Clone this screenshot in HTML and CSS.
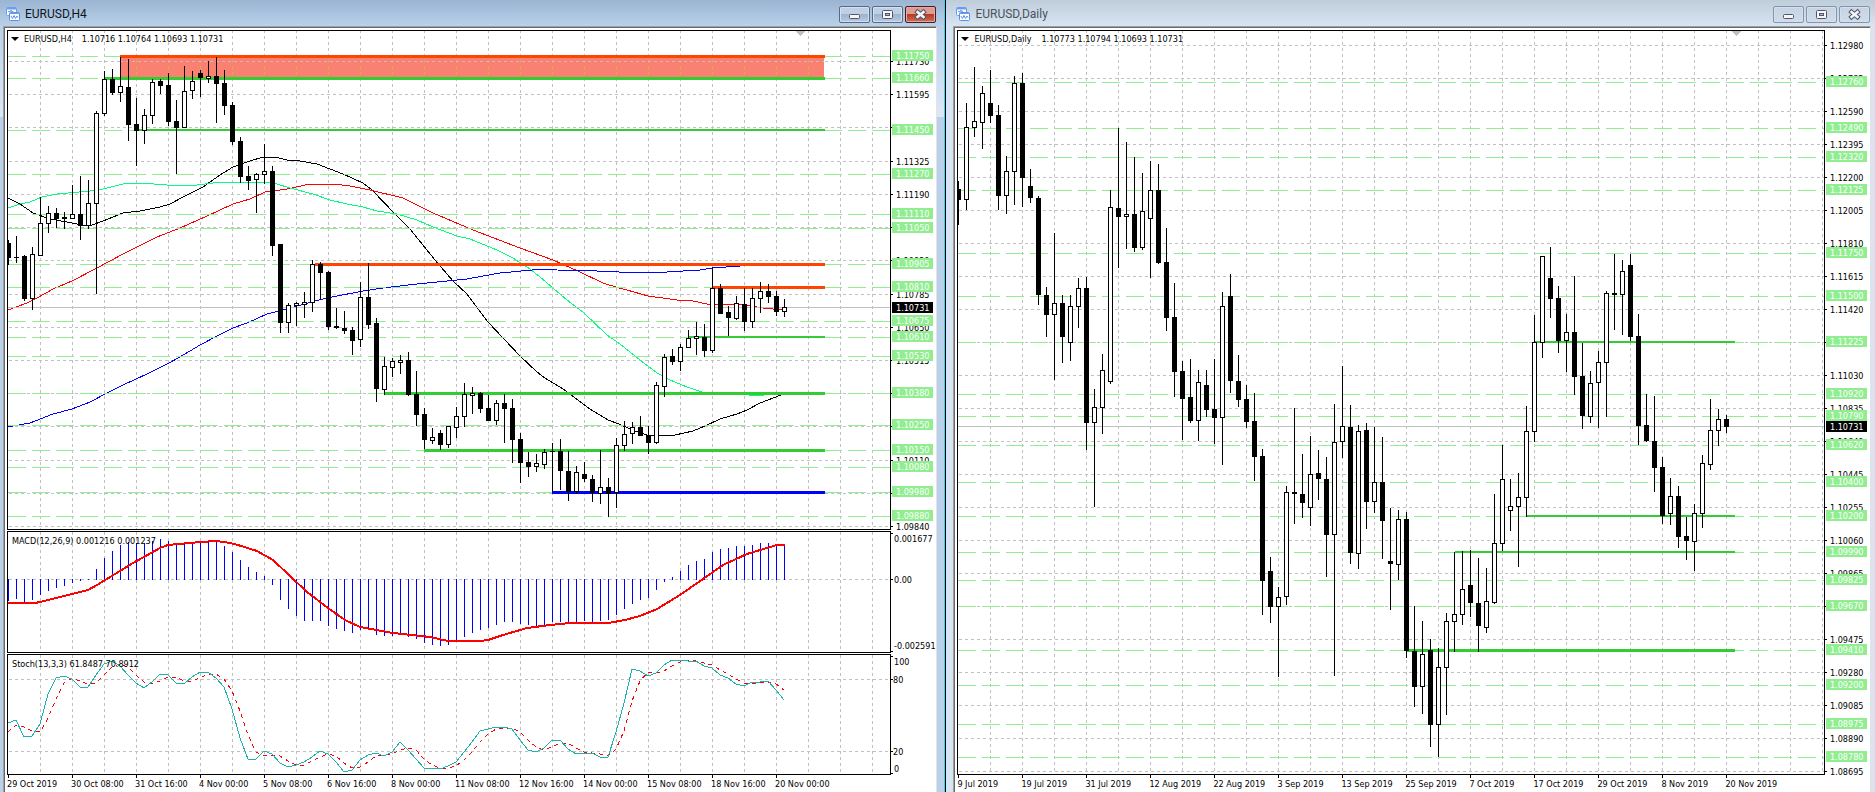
FILE: index.html
```html
<!DOCTYPE html>
<html lang="en">
<head>
<meta charset="utf-8">
<title>EURUSD charts</title>
<link rel="stylesheet" href="styles.css">
</head>
<body>
<svg class="sprite" aria-hidden="true">
  <symbol id="i-app" viewBox="0 0 14 14">
    <rect x="0.5" y="0.5" width="10" height="8" rx="1" fill="#fff" stroke="#6a9df0"/>
    <path d="M1 1.5h9" stroke="#6a9df0" stroke-width="2"/>
    <path d="M2 5l1-1 1 1 1-2 1 2 1-1" fill="none" stroke="#6a9df0"/>
    <rect x="3.5" y="5.500" width="10" height="8" rx="1" fill="#fff" stroke="#5a90ea"/>
    <path d="M4 6.500h9" stroke="#6a9df0" stroke-width="1"/>
    <path d="M5 9l1.500 2.500L8 8.500l1.500 3L11 9l1 1.500" fill="none" stroke="#5a90ea"/>
  </symbol>
  <symbol id="i-min" viewBox="0 0 31 17">
    <rect x="10.500" y="8.500" width="10" height="4" rx="1" fill="#f6f6f6" stroke="#53566b"/>
  </symbol>
  <symbol id="i-max" viewBox="0 0 31 17">
    <rect x="10.500" y="4.500" width="10" height="8" rx="1" fill="#f6f6f6" stroke="#53566b"/>
    <rect x="13.500" y="7.500" width="4" height="2" fill="#a9bfd8" stroke="#53566b"/>
  </symbol>
  <symbol id="i-close" viewBox="0 0 31 17">
    <path d="M12.500 6l6 5M18.500 6l-6 5" stroke="#53566b" stroke-width="4.500" stroke-linecap="square"/>
    <path d="M12.500 6l6 5M18.500 6l-6 5" stroke="#f6f6f6" stroke-width="2.500" stroke-linecap="square"/>
  </symbol>
</svg>

<main class="workspace">
  <section class="window window-active">
    <header class="titlebar">
      <svg class="app-icon" aria-hidden="true"><use href="#i-app"/></svg>
      <h1 class="title">EURUSD,H4</h1>
      <div class="controls">
        <button class="ctl" type="button" aria-label="Minimize"><svg><use href="#i-min"/></svg></button>
        <button class="ctl" type="button" aria-label="Restore"><svg><use href="#i-max"/></svg></button>
        <button class="ctl ctl-close" type="button" aria-label="Close"><svg><use href="#i-close"/></svg></button>
      </div>
    </header>
    <div class="client">
      <div class="pane pane-main">
        <div class="plot">
          <svg class="canvas" id="h4-plot"></svg>
          <p class="caption caption-main"><span class="caret"></span><span>EURUSD,H4</span><span>1.10716 1.10764 1.10693 1.10731</span></p>
        </div>
        <svg class="scale" id="h4-scale"></svg>
      </div>
      <div class="pane pane-macd">
        <div class="plot">
          <svg class="canvas" id="macd-plot"></svg>
          <p class="caption">MACD(12,26,9) 0.001216 0.001237</p>
        </div>
        <svg class="scale" id="macd-scale"></svg>
      </div>
      <div class="pane pane-stoch">
        <div class="plot">
          <svg class="canvas" id="stoch-plot"></svg>
          <p class="caption">Stoch(13,3,3) 61.8487 70.8912</p>
        </div>
        <svg class="scale" id="stoch-scale"></svg>
      </div>
      <div class="time-axis">
        <span>29 Oct 2019</span><span>30 Oct 08:00</span><span>31 Oct 16:00</span><span>4 Nov 00:00</span><span>5 Nov 08:00</span><span>6 Nov 16:00</span><span>8 Nov 00:00</span><span>11 Nov 08:00</span><span>12 Nov 16:00</span><span>14 Nov 00:00</span><span>15 Nov 08:00</span><span>18 Nov 16:00</span><span>20 Nov 00:00</span>
      </div>
    </div>
  </section>

  <section class="window window-inactive">
    <header class="titlebar">
      <svg class="app-icon" aria-hidden="true"><use href="#i-app"/></svg>
      <h2 class="title">EURUSD,Daily</h2>
      <div class="controls">
        <button class="ctl" type="button" aria-label="Minimize"><svg><use href="#i-min"/></svg></button>
        <button class="ctl" type="button" aria-label="Restore"><svg><use href="#i-max"/></svg></button>
        <button class="ctl" type="button" aria-label="Close"><svg><use href="#i-close"/></svg></button>
      </div>
    </header>
    <div class="client">
      <div class="pane pane-main">
        <div class="plot">
          <svg class="canvas" id="d1-plot"></svg>
          <p class="caption caption-main"><span class="caret"></span><span>EURUSD,Daily</span><span>1.10773 1.10794 1.10693 1.10731</span></p>
        </div>
        <svg class="scale" id="d1-scale"></svg>
      </div>
      <div class="time-axis">
        <span>9 Jul 2019</span><span>19 Jul 2019</span><span>31 Jul 2019</span><span>12 Aug 2019</span><span>22 Aug 2019</span><span>3 Sep 2019</span><span>13 Sep 2019</span><span>25 Sep 2019</span><span>7 Oct 2019</span><span>17 Oct 2019</span><span>29 Oct 2019</span><span>8 Nov 2019</span><span>20 Nov 2019</span>
      </div>
    </div>
  </section>
</main>
<script src="charts.js"></script>
</body>
</html>
```

FILE: styles.css
```css
* { box-sizing: border-box; }

body {
  margin: 0;
  background: #fff;
  color: #000;
  font-family: "DejaVu Sans Condensed", "DejaVu Sans", sans-serif;
  font-size: 9px;
}

.sprite { display: none; }

.workspace {
  display: flex;
  height: 100vh;
  min-height: 480px;
  overflow: hidden;
}

.window {
  display: flex;
  flex-direction: column;
  min-width: 0;
}

.window-active {
  flex: 946 1 0;
  border-right: 1px solid #000;
  box-shadow: inset -1px 0 0 #35d6f5;
  background:
    linear-gradient(#9ab4d2, #b9d1ea) 0 0 / 100% 26px no-repeat,
    linear-gradient(#b9d1ea, #dbe8f6) 0 26px / 100% 91px no-repeat,
    #b9d1ea;
  padding: 0 8px 0 3px;
}

.window-inactive {
  flex: 929 1 0;
  background:
    linear-gradient(#bfcddb, #d7e4f2) 0 0 / 100% 26px no-repeat,
    #d7e4f2;
  padding: 0 4px 0 7px;
}

.titlebar {
  display: flex;
  align-items: center;
  height: 26px;
  flex: none;
  padding: 2px 1px 0 3px;
}

.app-icon { width: 14px; height: 14px; }

.title {
  margin: 0 auto 0 5px;
  font: 400 12px/16px Roboto, sans-serif;
  color: #10151c;
}

.window-inactive .title { color: #4c5157; }

.controls { display: flex; gap: 2px; }

.ctl {
  width: 31px;
  height: 17px;
  padding: 0;
  border: 1px solid #586a86;
  border-radius: 2px;
  background: linear-gradient(#bfd0e4 0 45%, #9db4cf 50%, #b6cbe3);
  box-shadow: inset 0 0 0 1px #d3e0ef;
}

.ctl svg { display: block; width: 31px; height: 17px; margin: -1px; }

.window-inactive .ctl {
  border-color: #8593ad;
  background: linear-gradient(#c6d3e2, #cfdcea);
  box-shadow: inset 0 0 0 1px #d3dfeb;
}

.window-active .ctl-close {
  border-color: #431d28;
  background: linear-gradient(#dd9c91 0 45%, #b83a22 50%, #d0705a);
  box-shadow: inset 0 0 0 1px #e3a99f;
}

.client {
  flex: 1;
  min-height: 0;
  display: flex;
  flex-direction: column;
  gap: 1px;
  border: 1px solid #a0a0a0;
  border-right-color: #e3e3e3;
  border-bottom: 0;
  background: #fff;
  box-shadow: inset 1px 1px 0 #696969;
  padding: 3px 0 0 3px;
}

.pane { display: flex; }
.pane-main { flex: 1; min-height: 0; }
.pane-macd { height: 122px; flex: none; }
.pane-stoch { height: 121px; flex: none; }

.plot {
  position: relative;
  flex: 1;
  min-width: 0;
  border: 1px solid #000;
  overflow: hidden;
}

.canvas {
  display: block;
  width: 100%;
  height: 100%;
  shape-rendering: crispEdges;
}

.scale {
  width: 45px;
  height: 100%;
  flex: none;
  overflow: visible;
  shape-rendering: crispEdges;
}

.caption {
  position: absolute;
  top: 3px;
  left: 4px;
  margin: 0;
  line-height: 12px;
  white-space: nowrap;
}

.caption-main {
  display: flex;
  align-items: center;
  gap: 5px;
  top: 2px;
  left: 3px;
}

.caption-main span:last-child { margin-left: 5px; }

.caret {
  border: 4px solid transparent;
  border-top-color: #000;
  border-bottom: 0;
}

.time-axis {
  display: flex;
  flex: none;
  height: 17px;
  margin-top: -1px;
  overflow: hidden;
  line-height: 19px;
}

.time-axis span {
  flex: 0 0 64px;
  white-space: nowrap;
  background: linear-gradient(#000, #000) 1px 0 / 1px 3px no-repeat;
}

.grid { stroke: #c0c0c0; stroke-dasharray: 3 3; }
.grid-shaded { stroke: #bcc04a; stroke-dasharray: 3 3; }
.level { stroke: #90ee90; stroke-dasharray: 18 6; }
.price-line { stroke: #c0c0c0; }
.zone { fill: #fa8072; }
.curve { fill: none; }
.wick { stroke: #000; }
.body-up { fill: #fff; stroke: #000; }
.body-down { fill: #000; stroke: #000; }
.histogram { stroke: #00f; }
.signal { fill: none; stroke: #f00; stroke-width: 2; }
.stoch-main { fill: none; stroke: #20b2aa; }
.stoch-signal { fill: none; stroke: #f00; stroke-dasharray: 4 4; }
.shift-mark { fill: #c0c0c0; }
.tick { stroke: #000; }
.scale text { fill: #000; }
.tag { fill: #90ee90; }
.scale .tag-text { fill: #fff; }
.tag-current { fill: #000; }
```

FILE: charts.js
```js
// Coordinates are window-relative: the plots start at x = 8 and y = 31.
const NS = 'http://www.w3.org/2000/svg';
const LEFT = 8;
const STEP = 8;

function add(parent, name, attrs, text) {
  const el = document.createElementNS(NS, name);
  for (const key in attrs) el.setAttribute(key, attrs[key]);
  if (text !== undefined) el.textContent = text;
  parent.appendChild(el);
  return el;
}

function group(id, dx, dy) {
  return add(document.getElementById(id), 'g', { transform: `translate(${dx} ${dy})` });
}

function hline(g, cls, x1, x2, y) {
  add(g, 'path', { class: cls, d: `M${x1} ${y + 0.5}H${x2}` });
}

function verticals(g, width, top, bottom) {
  for (let x = 40; x < width + LEFT; x += 32) {
    add(g, 'path', { class: 'grid', d: `M${x + 0.5} ${top}V${bottom}` });
  }
}

function curve(g, color, points) {
  add(g, 'polyline', { class: 'curve', stroke: color, points });
}

// A segment is [color, thickness, x start, x end, top y].
function segments(g, list) {
  for (const [fill, height, x1, x2, y] of list) {
    add(g, 'rect', { fill, x: x1, y, width: x2 - x1, height });
  }
}

// A candle is "high top bottom low direction", direction + for a rise.
function candles(g, data) {
  data.trim().split(/\s*,\s*/).forEach((row, i) => {
    const [h, t, b, l, dir] = row.split(' ');
    const x = LEFT + i * STEP;
    add(g, 'path', { class: 'wick', d: `M${x + 0.5} ${h}V${+l + 1}` });
    if (t === b) {
      hline(g, 'wick', x - 2, x + 3, +t);
    } else {
      add(g, 'rect', {
        class: dir === '+' ? 'body-up' : 'body-down',
        x: x - 1.5, y: +t + 0.5, width: 4, height: b - t
      });
    }
  });
}

function priceChart(id, cfg) {
  const plot = document.getElementById(id + '-plot');
  const width = plot.clientWidth;
  const height = plot.clientHeight;
  const g = group(id + '-plot', -LEFT, -31);
  const right = width + LEFT;

  verticals(g, width, 30, 31 + height);
  cfg.grid.forEach(([y]) => hline(g, 'grid', 9, right, y));
  if (cfg.zone) {
    const [x, y, w, h] = cfg.zone;
    add(g, 'rect', { class: 'zone', x, y, width: w, height: h });
    for (let gx = 136; gx < x + w; gx += 32) {
      add(g, 'path', { class: 'grid-shaded', d: `M${gx + 0.5} ${y + 4}V${y + h}` });
    }
    hline(g, 'grid', x, x + w, 61);
  }
  (cfg.curves || []).forEach(([color, points]) => curve(g, color, points));
  cfg.levels.forEach(([y]) => hline(g, 'level', LEFT, right, y));
  hline(g, 'price-line', LEFT, right, cfg.current);
  segments(g, cfg.segments);
  candles(g, cfg.candles);
  add(g, 'path', { class: 'shift-mark', d: `M${cfg.mark - 4} 31h9l-4.5 5z` });

  const s = group(id + '-scale', 0, -30);
  cfg.grid.forEach(([y, label]) => {
    hline(s, 'tick', 0, 2, y);
    add(s, 'text', { x: 5, y: y + 4 }, label);
  });
  cfg.levels.forEach(([y, label]) => {
    add(s, 'rect', { class: 'tag', x: 1, y: y - 6, width: 41, height: 11 });
    add(s, 'text', { class: 'tag-text', x: 5, y: y + 3 }, label);
  });
  add(s, 'rect', { class: 'tag-current', x: 1, y: cfg.current - 5, width: 41, height: 11 });
  add(s, 'text', { class: 'tag-text', x: 5, y: cfg.current + 4 }, '1.10731');
}

priceChart('h4', {
  current: 307,
  mark: 800,
  grid: [[61, '1.11730'], [94, '1.11595'], [127, '1.11460'], [161, '1.11325'], [194, '1.11190'],
    [227, '1.11055'], [260, '1.10920'], [294, '1.10785'], [327, '1.10650'], [360, '1.10515'],
    [393, '1.10380'], [426, '1.10245'], [460, '1.10110'], [493, '1.09975'], [526, '1.09840']],
  levels: [[56, '1.11750'], [78, '1.11660'], [130, '1.11450'], [174, '1.11270'], [214, '1.11110'],
    [228, '1.11050'], [264, '1.10905'], [287, '1.10810'], [321, '1.10675'], [337, '1.10610'],
    [356, '1.10530'], [393, '1.10380'], [425, '1.10250'], [450, '1.10150'], [467, '1.10080'],
    [492, '1.09980'], [516, '1.09880']],
  zone: [120, 56, 704, 22],
  curves: [
    ['#000', '8,198 20,204 33,213 50,219 67,222 82,225 92,225 103,221 123,213 140,211 160,207 170,204 185,196 203,187 220,175 233,167 247,162 263,157 275,157 287,160 300,161 317,164 330,169 343,174 363,183 372,190 395,214 410,229 435,260 453,281 467,294 488,322 520,356 537,372 545,378 563,389 590,409 608,420 619,424 635,431 647,435 675,435 693,431 705,426 720,419 737,414 747,410 760,403 781,395'],
    ['#f00', '8,310 27,303 37,298 53,289 72,281 97,268 110,261 123,254 157,237 180,228 207,216 233,204 250,199 265,192 287,189 310,184 333,184 350,186 370,190 403,198 433,213 473,230 520,248 553,260 580,272 603,283 619,288 627,290 648,296 677,300 693,301 707,304 740,304 750,306 763,308 783,310'],
    ['#00ff7f', '8,208 20,204 30,202 42,197 57,194 90,191 103,189 123,184 140,183 167,185 197,185 213,183 233,182 267,182 277,184 290,188 313,194 330,200 347,204 363,207 377,211 397,214 417,220 433,227 457,236 470,239 497,250 513,258 530,269 540,277 567,300 583,312 607,335 620,344 640,360 657,373 670,380 687,387 702,392 725,394 749,395 764,395 784,393'],
    ['#00f', '8,427 30,423 53,414 72,409 90,402 107,393 123,385 147,374 167,364 180,357 200,345 217,336 233,328 247,323 267,314 283,310 319,300 327,298 363,291 383,288 417,284 447,281 467,279 500,273 543,269 557,270 597,271 619,272 645,272 652,273 667,272 700,270 713,268 740,266']
  ],
  segments: [
    ['#ff4500', 3, 120, 825, 55], ['#32cd32', 3, 104, 825, 77], ['#32cd32', 2, 136, 825, 129],
    ['#ff4500', 3, 315, 825, 263], ['#ff4500', 3, 712, 825, 286], ['#32cd32', 2, 688, 825, 336],
    ['#32cd32', 3, 384, 825, 392], ['#32cd32', 3, 424, 825, 449], ['#00f', 3, 552, 825, 491]
  ],
  candles: `240 243 257 264 -,236 257 257 262 -,255 256 298 300 -,247 254 298 309 +,197 223 255 255 +,
    206 213 223 232 +,208 213 218 227 -,212 217 218 228 -,185 214 218 218 +,176 214 225 239 -,
    180 203 225 228 +,111 113 203 293 +,71 79 113 115 +,69 79 92 94 -,57 86 92 101 +,
    59 87 124 140 -,98 124 130 165 -,109 115 130 143 +,79 82 115 123 +,79 81 85 93 -,
    73 85 121 125 -,100 121 127 173 -,66 91 127 127 +,71 81 90 98 +,70 73 77 96 -,
    61 76 78 82 +,57 76 83 122 -,70 83 105 114 -,102 105 141 144 -,137 141 176 182 -,
    166 176 180 189 -,173 174 179 212 +,144 171 174 183 +,166 171 245 255 -,244 244 322 332 -,
    303 305 322 332 +,302 303 305 325 +,292 302 304 317 +,260 264 302 311 +,262 264 272 299 -,
    271 272 326 329 -,308 326 327 328 -,311 328 330 333 -,327 330 340 354 -,282 297 339 346 +,
    263 297 324 328 -,318 323 388 401 -,357 366 389 394 +,358 361 367 376 +,355 360 362 373 +,
    352 360 394 395 -,371 394 414 425 -,408 414 439 448 -,428 437 440 443 +,430 433 444 449 -,
    426 426 444 447 +,407 416 427 437 +,383 394 416 426 +,387 393 395 413 +,392 393 408 412 -,
    395 408 420 420 -,400 403 420 424 +,394 403 408 442 -,399 408 439 462 -,433 439 462 482 -,
    452 462 466 476 -,454 463 466 471 +,449 452 464 468 +,443 451 451 491 -,439 451 470 489 -,
    451 471 491 500 -,466 472 491 493 +,462 474 478 481 -,475 479 492 501 -,450 487 493 503 +,
    478 487 493 516 -,438 445 492 507 +,421 434 445 450 +,422 427 433 443 +,416 427 435 435 -,
    426 435 442 453 -,382 385 442 443 +,354 357 386 396 +,349 356 361 364 -,344 347 361 370 +,
    330 338 347 347 +,322 336 338 354 +,324 337 350 356 -,267 288 350 352 +,284 288 313 313 -,
    306 312 317 335 -,296 303 318 319 +,288 304 321 330 -,288 298 321 327 +,282 291 298 312 +,
    284 291 296 302 -,291 296 311 315 -,299 307 311 316 +`
});

priceChart('d1', {
  current: 426,
  mark: 786,
  grid: [[45, '1.12980'], [78, '1.12785'], [111, '1.12590'], [144, '1.12395'], [177, '1.12200'],
    [210, '1.12005'], [243, '1.11810'], [276, '1.11615'], [309, '1.11420'], [342, '1.11225'],
    [375, '1.11030'], [408, '1.10835'], [441, '1.10640'], [474, '1.10445'], [507, '1.10255'],
    [540, '1.10060'], [573, '1.09865'], [606, '1.09670'], [639, '1.09475'], [672, '1.09280'],
    [705, '1.09085'], [738, '1.08890'], [771, '1.08695']],
  levels: [[82, '1.12760'], [128, '1.12490'], [157, '1.12320'], [190, '1.12125'], [253, '1.11750'],
    [296, '1.11500'], [342, '1.11225'], [394, '1.10920'], [416, '1.10790'], [445, '1.10620'],
    [482, '1.10400'], [516, '1.10200'], [552, '1.09990'], [580, '1.09825'], [606, '1.09670'],
    [650, '1.09410'], [685, '1.09200'], [724, '1.08975'], [757, '1.08780']],
  segments: [
    ['#32cd32', 2, 584, 785, 341], ['#32cd32', 2, 576, 785, 515],
    ['#32cd32', 2, 505, 785, 551], ['#32cd32', 3, 456, 785, 649]
  ],
  candles: `181 189 199 224 -,103 127 199 209 +,67 121 127 136 +,86 93 122 148 +,70 103 115 122 -,
    105 115 195 209 -,156 171 195 213 +,76 83 171 204 +,73 83 177 206 -,169 186 197 202 -,
    196 198 294 304 -,287 295 314 336 -,233 303 314 379 +,295 303 336 362 -,295 306 342 360 +,
    278 288 306 327 +,277 288 422 449 -,389 407 422 506 +,354 370 407 433 +,190 207 381 383 +,
    128 208 216 267 -,142 214 216 248 +,157 214 247 251 -,173 211 247 249 +,161 190 218 277 +,
    164 190 262 263 -,228 262 317 330 -,283 317 371 396 -,361 371 398 439 -,359 397 420 422 -,
    370 382 420 440 +,370 385 409 416 -,359 409 417 443 -,292 306 417 464 +,274 296 380 392 -,
    355 381 399 406 -,385 399 421 427 -,393 421 456 480 -,449 456 580 614 -,557 571 606 622 -,
    587 597 606 676 +,486 492 596 604 +,408 492 493 523 -,454 494 502 517 -,436 474 507 525 +,
    450 473 478 499 -,457 479 534 576 -,404 442 534 675 +,366 426 441 457 +,405 427 552 563 -,
    425 431 553 568 +,423 430 501 528 -,427 482 501 512 +,437 482 520 558 -,508 561 563 609 -,
    510 519 564 579 +,512 519 650 657 -,606 651 686 706 -,621 654 686 713 +,639 650 724 746 -,
    648 667 724 756 +,613 621 667 714 +,552 614 621 651 +,551 589 614 624 +,550 585 602 616 -,
    558 603 625 651 -,568 601 627 632 +,494 543 602 603 +,445 479 543 550 +,479 506 510 530 +,
    473 497 506 566 +,406 431 497 516 +,315 342 431 441 +,256 256 342 357 +,247 278 298 317 -,
    286 298 340 352 -,314 332 340 371 +,276 332 376 394 -,343 376 415 428 -,371 383 416 422 +,
    351 362 382 427 +,291 293 362 416 +,254 293 294 329 -,260 271 294 334 +,254 265 336 340 -,
    314 336 425 444 -,394 425 440 441 -,396 441 467 491 -,457 467 515 523 -,478 496 513 524 +,
    486 496 536 547 -,517 536 540 559 -,504 513 541 570 +,455 463 513 527 +,399 430 464 469 +,
    409 419 430 445 +,415 419 426 432 -`
});

// MACD: bar ends per candle around the zero line.
(function () {
  const zero = 579;
  const bars = [600, 598, 601, 599, 594, 590, 587, 585, 582, 580, 579, 569, 558, 551, 545, 542, 543,
    543, 541, 539, 541, 543, 543, 543, 542, 541, 542, 546, 552, 560, 567, 572, 576, 584, 599, 608,
    615, 620, 620, 620, 625, 628, 630, 632, 629, 629, 634, 635, 635, 633, 636, 638, 642, 644, 645,
    644, 640, 636, 632, 629, 627, 624, 621, 621, 623, 624, 625, 624, 621, 621, 621, 621, 620, 621,
    620, 619, 614, 608, 603, 599, 597, 589, 581, 577, 571, 565, 561, 559, 552, 549, 548, 546, 546,
    545, 543, 543, 545, 545];
  const width = document.getElementById('macd-plot').clientWidth;
  const g = group('macd-plot', -LEFT, -532);
  verticals(g, width, 532, 652);
  hline(g, 'grid', 9, width + LEFT, zero);
  bars.forEach((y, i) => {
    const x = LEFT + i * STEP + 0.5;
    add(g, 'path', { class: 'histogram', d: `M${x} ${Math.min(y, zero)}V${Math.max(y, zero) + 1}` });
  });
  add(g, 'polyline', {
    class: 'signal',
    points: '8,603 35,603 40,602 88,590 97,585 133,563 160,548 168,545 200,542 217,541 230,543 238,545 257,551 273,560 290,576 307,592 328,608 345,620 360,627 393,633 430,637 448,641 480,641 488,640 503,635 527,628 550,625 570,623 608,623 625,620 640,616 657,609 680,595 703,579 723,565 747,554 777,545 785,545'
  });
  const s = group('macd-scale', 0, -531);
  [[538, '0.001677'], [579, '0.00'], [645, '-0.002591']].forEach(([y, label]) => {
    add(s, 'text', { x: 3, y: y + 4 }, label);
  });
  [533, 579, 651].forEach(y => hline(s, 'tick', 0, 2, y));
})();

// Stochastic: the signal is a three-period average of the main line.
(function () {
  const main = [723, 720, 737, 736, 724, 694, 678, 676, 679, 687, 687, 675, 664, 661, 666, 675, 683,
    688, 682, 674, 675, 683, 684, 677, 672, 672, 678, 687, 709, 738, 759, 759, 751, 754, 763, 767,
    765, 762, 757, 751, 754, 762, 772, 770, 760, 755, 753, 756, 752, 742, 750, 759, 768, 768, 769,
    766, 762, 752, 742, 731, 729, 727, 727, 729, 740, 750, 752, 748, 740, 740, 749, 754, 753, 753,
    757, 757, 732, 703, 669, 671, 676, 673, 665, 660, 660, 661, 661, 666, 668, 675, 678, 684, 686,
    682, 682, 681, 690, 700];
  const padded = [742, 731].concat(main);
  const signal = main.map((y, i) => Math.round((padded[i] + padded[i + 1] + y) / 3));
  const points = values => values.map((y, i) => `${LEFT + i * STEP},${y}`).join(' ');
  const width = document.getElementById('stoch-plot').clientWidth;
  const g = group('stoch-plot', -LEFT, -655);
  verticals(g, width, 655, 774);
  [679, 751].forEach(y => hline(g, 'grid', 9, width + LEFT, y));
  add(g, 'polyline', { class: 'stoch-signal', points: points(signal) });
  add(g, 'polyline', { class: 'stoch-main', points: points(main) });
  const s = group('stoch-scale', 0, -654);
  [[661, '100', 3], [679, '80', 2], [751, '20', 2], [768, '0', 3]].forEach(([y, label, x]) => {
    add(s, 'text', { x, y: y + 4 }, label);
  });
  [656, 679, 751, 773].forEach(y => hline(s, 'tick', 0, 2, y));
})();
```
